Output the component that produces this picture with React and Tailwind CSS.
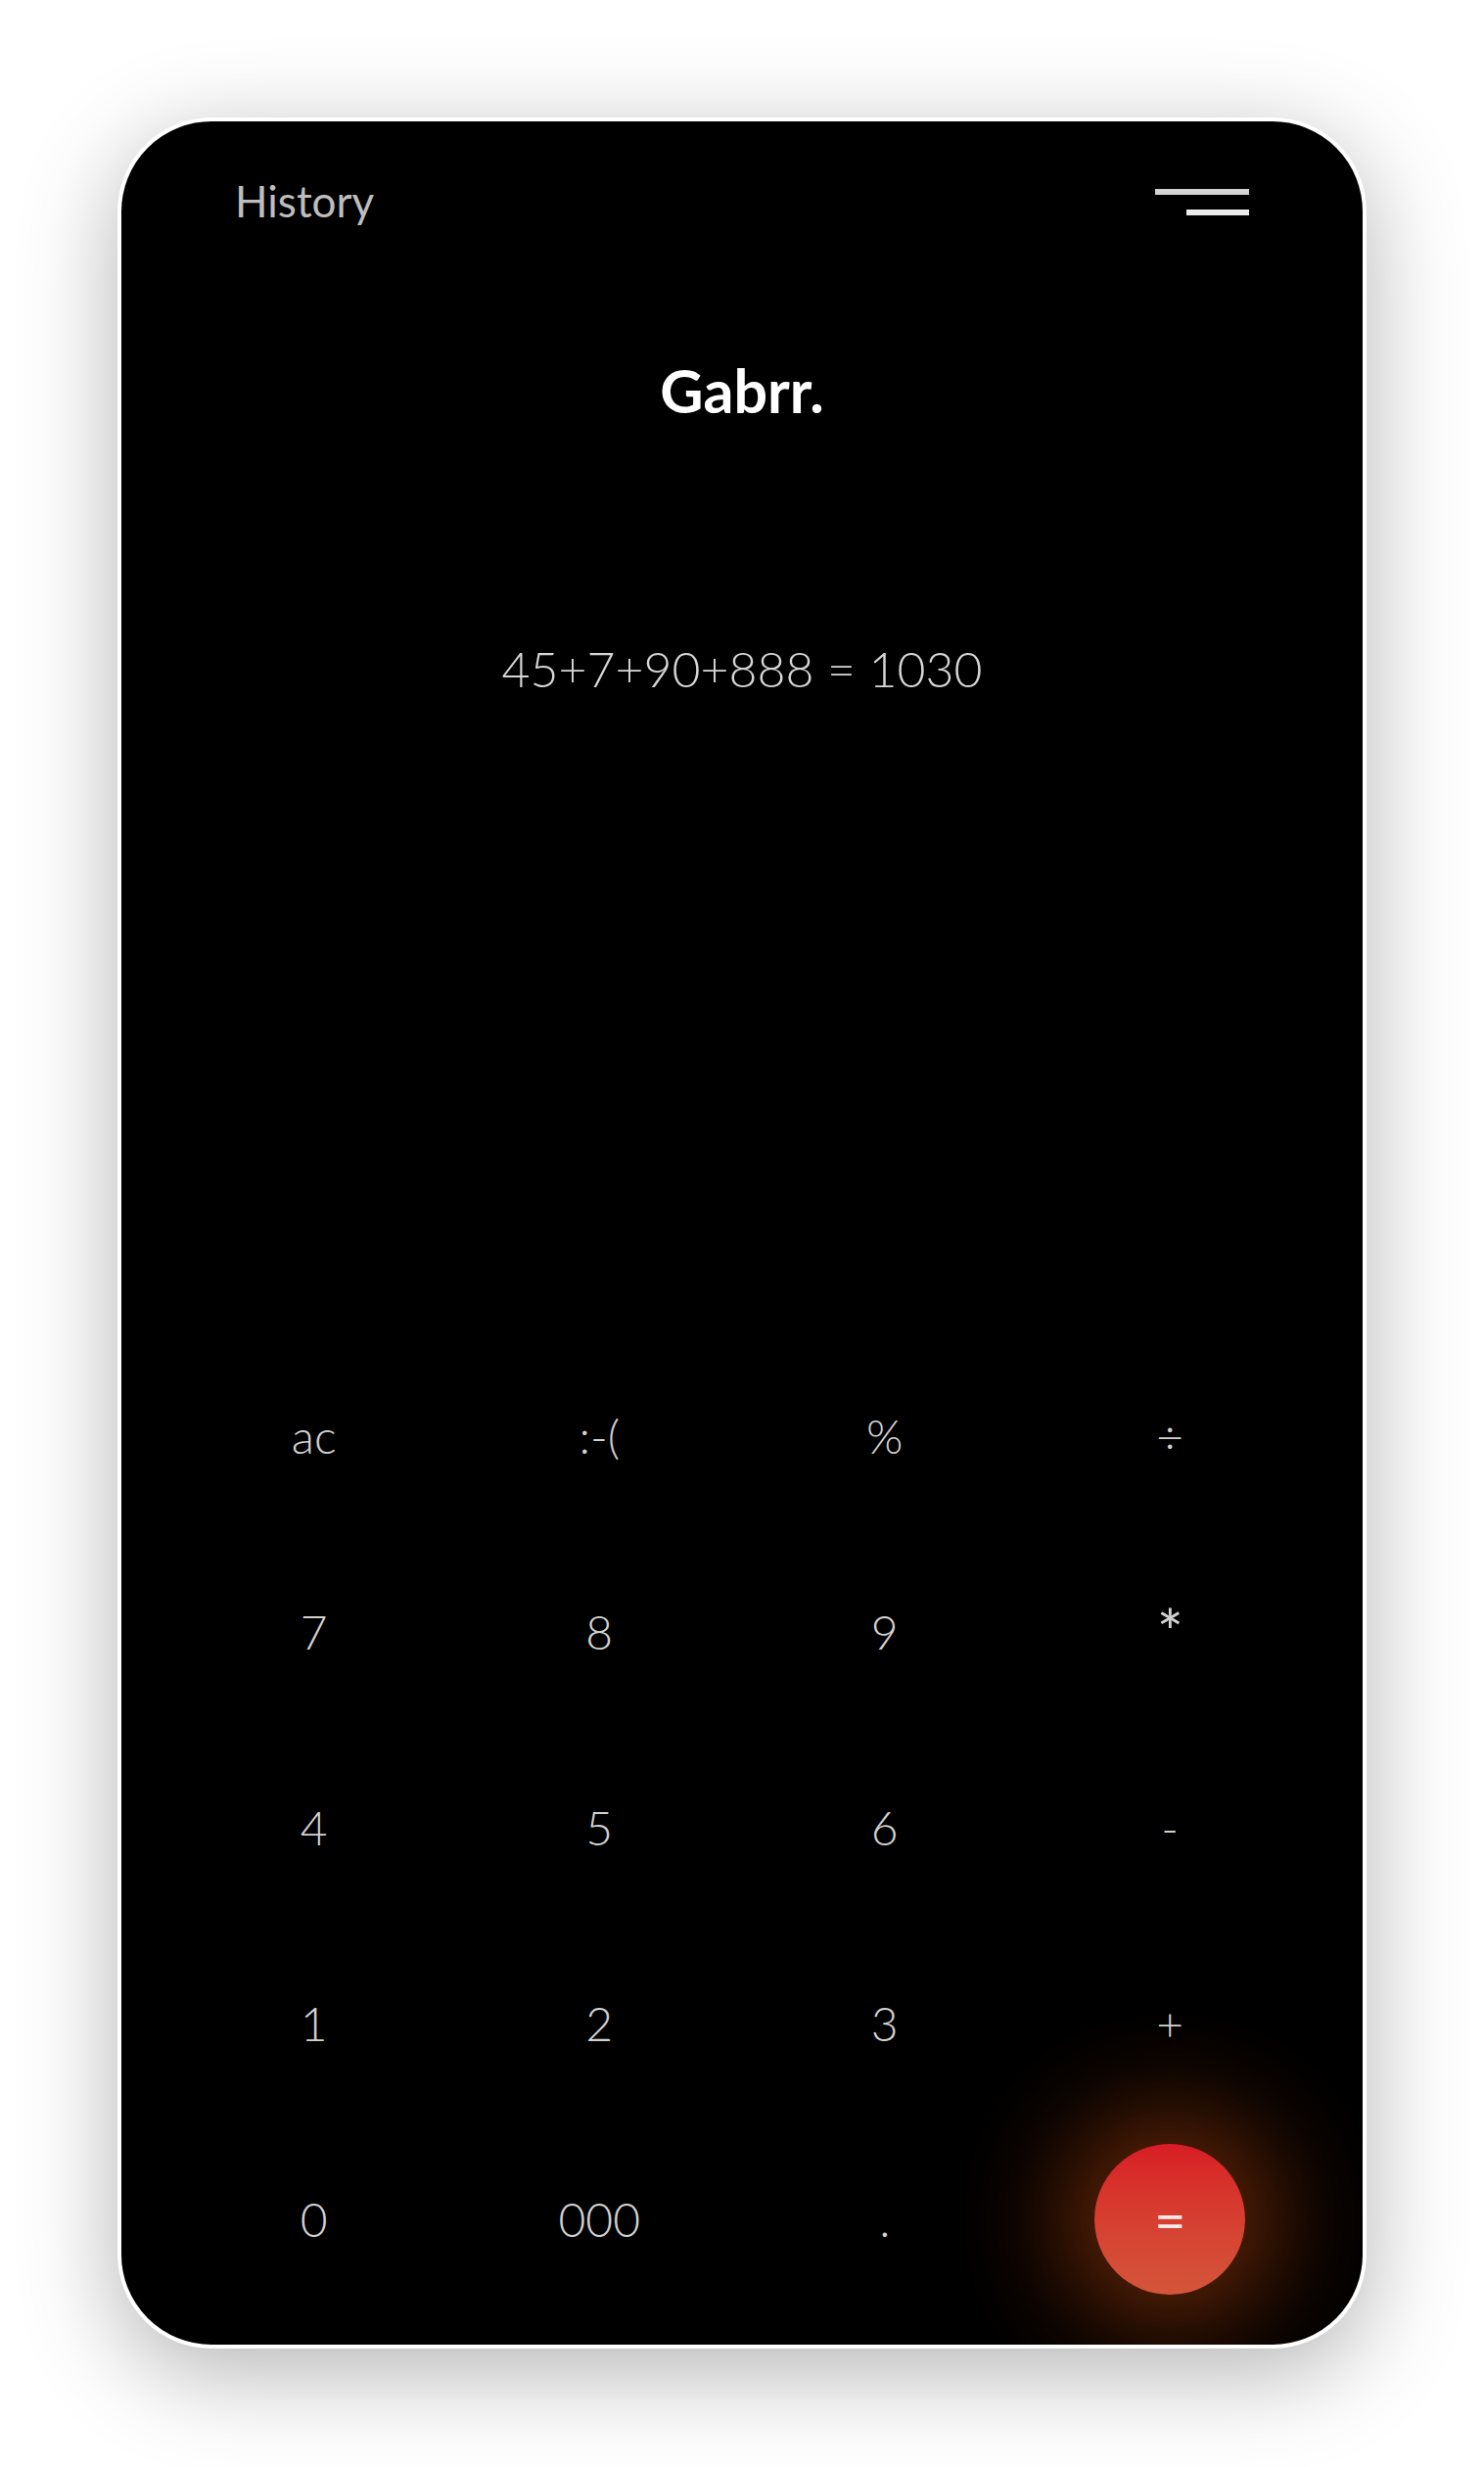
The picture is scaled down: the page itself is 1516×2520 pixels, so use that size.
import React, { useState } from "react";

const keys = [
  "ac", ":-(", "%", "÷",
  "7", "8", "9", "*",
  "4", "5", "6", "-",
  "1", "2", "3", "+",
  "0", "000", ".", "=",
];

const App = () => {
  const [expression, setExpression] = useState("45+7+90+888 = 1030");

  const press = (k) => {
    if (k === "ac") setExpression("");
  };

  return (
    <div className="min-h-screen w-full bg-white px-[120px] pt-[120px] pb-[121px] font-['Lato','Open_Sans',sans-serif]">
      {/* phone card */}
      <div className="relative flex h-[2279px] flex-col overflow-hidden rounded-[96px] border-4 border-white bg-black shadow-[0_24px_100px_rgba(0,0,0,0.3)]">
        {/* top bar */}
        <div className="flex items-start justify-between px-[116px] pt-[59px]">
          <p className="text-[44px] leading-none font-normal text-[#bdbdbd]">History</p>
          <div className="mt-[10px] flex flex-col items-end gap-[15px]">
            <div className="h-[6px] w-[96px] bg-[#d4d4d4]"></div>
            <div className="h-[6px] w-[64px] bg-[#ececec]"></div>
          </div>
        </div>

        <h1 className="mt-[141px] text-center text-[61px] leading-none font-bold text-white">
          Gabrr.
        </h1>

        <p className="mt-[229px] text-center text-[50px] leading-none font-light text-[#d6d6d6]">
          {expression}
        </p>

        {/* keypad */}
        <div className="mt-auto grid grid-cols-4 px-[51px] pb-[28px]">
          {keys.map((k) =>
            k === "=" ? (
              <div key={k} className="flex h-[200px] items-center justify-center">
                <button
                  onClick={() => press(k)}
                  className="flex h-[154px] w-[154px] items-center justify-center rounded-full bg-gradient-to-b from-[#d81c25] to-[#d4553a] text-[56px] leading-none font-normal text-[#fbe9e7] shadow-[0_0_110px_35px_rgba(240,90,20,0.42)]"
                >
                  =
                </button>
              </div>
            ) : (
              <button
                key={k}
                onClick={() => press(k)}
                className={`flex h-[200px] items-center justify-center leading-none font-light text-[#d2d2d2] ${
                  k === "*" ? "text-[64px] font-normal" : "text-[48px]"
                }`}
              >
                {k}
              </button>
            )
          )}
        </div>
      </div>
    </div>
  );
};

export default App;
